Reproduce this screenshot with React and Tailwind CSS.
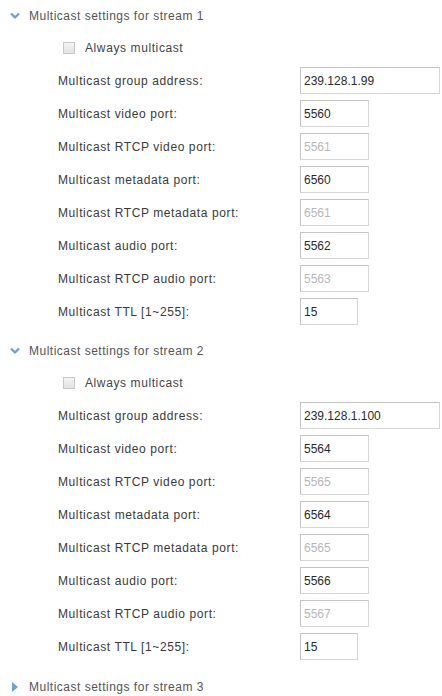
import React from 'react';

const streams = [
  {
    id: 1,
    open: true,
    rows: [
      { label: 'Multicast group address:', value: '239.128.1.99', wide: true },
      { label: 'Multicast video port:', value: '5560' },
      { label: 'Multicast RTCP video port:', value: '5561', disabled: true },
      { label: 'Multicast metadata port:', value: '6560' },
      { label: 'Multicast RTCP metadata port:', value: '6561', disabled: true },
      { label: 'Multicast audio port:', value: '5562' },
      { label: 'Multicast RTCP audio port:', value: '5563', disabled: true },
      { label: 'Multicast TTL [1~255]:', value: '15', ttl: true },
    ],
  },
  {
    id: 2,
    open: true,
    rows: [
      { label: 'Multicast group address:', value: '239.128.1.100', wide: true },
      { label: 'Multicast video port:', value: '5564' },
      { label: 'Multicast RTCP video port:', value: '5565', disabled: true },
      { label: 'Multicast metadata port:', value: '6564' },
      { label: 'Multicast RTCP metadata port:', value: '6565', disabled: true },
      { label: 'Multicast audio port:', value: '5566' },
      { label: 'Multicast RTCP audio port:', value: '5567', disabled: true },
      { label: 'Multicast TTL [1~255]:', value: '15', ttl: true },
    ],
  },
  { id: 3, open: false, rows: [] },
];

function Arrow({ open }) {
  if (open) {
    return (
      <svg width="10" height="8" viewBox="0 0 10 8" className="ml-[10px] mr-[9px]">
        <polyline points="1,1.5 5,5.5 9,1.5" fill="none" stroke="#6f9fd6" strokeWidth="2.4" strokeLinejoin="round" />
      </svg>
    );
  }
  return (
    <svg width="8" height="12" viewBox="0 0 8 12" className="ml-[11px] mr-[10px]">
      <polygon points="1,1 7,6 1,11" fill="#6f9fd6" />
    </svg>
  );
}

function Header({ stream, extra }) {
  return (
    <div className={`flex h-[31px] items-center text-[12px] tracking-[0.5px] text-[#555] ${extra}`}>
      <Arrow open={stream.open} />
      <span>Multicast settings for stream {stream.id}</span>
    </div>
  );
}

function Field({ row }) {
  const width = row.wide ? 'w-[140px]' : row.ttl ? 'w-[58px]' : 'w-[69px]';
  return (
    <div className="flex h-[33px] items-center">
      <div className="w-[300px] shrink-0 pl-[58px] text-[12px] tracking-[0.6px] text-[#3a3a3a]">{row.label}</div>
      <div
        className={`${width} flex h-[27px] items-center border border-[#d6d6d6] border-t-[#c4c4c4] border-l-[#c4c4c4] bg-white pl-[3px] text-[12px] ${
          row.disabled ? 'text-[#b8b8b8]' : 'text-[#2a2a2a]'
        }`}
      >
        {row.value}
      </div>
    </div>
  );
}

export default function App() {
  return (
    <div className="w-[442px] h-[696px] overflow-hidden bg-white" style={{ fontFamily: '"Liberation Sans", Arial, sans-serif' }}>
      {streams.map((stream, i) => (
        <div key={stream.id}>
          <Header stream={stream} extra={i === 0 ? '' : i === 1 ? 'mt-[7px]' : 'mt-[8px]'} />
          {stream.open && (
            <>
              <div className="flex h-[33px] items-center pl-[63px] text-[12px] tracking-[0.6px] text-[#444]">
                <span className="mr-[10px] h-[12px] w-[12px] border border-[#c8c8c8] bg-gradient-to-b from-[#f4f4f4] to-[#e2e2e2]" />
                Always multicast
              </div>
              {stream.rows.map((row) => (
                <Field key={row.label} row={row} />
              ))}
            </>
          )}
        </div>
      ))}
    </div>
  );
}
